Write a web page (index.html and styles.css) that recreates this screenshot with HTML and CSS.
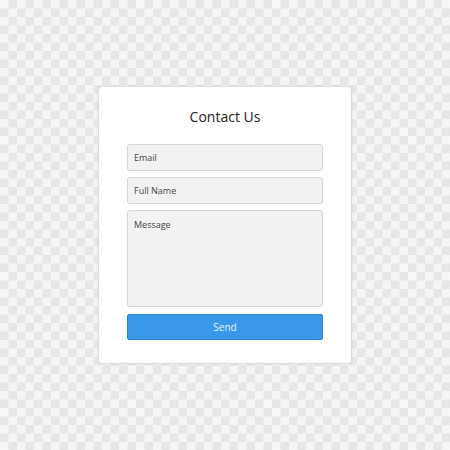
FILE: index.html
```html
<!DOCTYPE html>
<html lang="en">
<head>
    <meta charset="UTF-8">
    <meta name="viewport" content="width=device-width, initial-scale=1.0">
    <title>Contact Us</title>
    <link rel="stylesheet" href="styles.css">
</head>
<body>
    <!-- Contact Card -->
    <div class="contact-card">
        <h2>Contact Us</h2>
        <form class="contact-form">
            <input type="text" class="field" placeholder="Email">
            <input type="text" class="field" placeholder="Full Name">
            <textarea class="field message" placeholder="Message"></textarea>
            <button type="button">Send</button>
        </form>
    </div>
</body>
</html>
```

FILE: styles.css
```css
html, body {
    height: 100%;
}
body {
    font-family: "Open Sans", Arial, sans-serif;
    display: flex;
    justify-content: center;
    align-items: center;
    margin: 0;
    background-color: #f5f5f5;
    background-image:
        linear-gradient(45deg, #e6e6e6 25%, transparent 25%, transparent 75%, #e6e6e6 75%),
        linear-gradient(45deg, #e6e6e6 25%, transparent 25%, transparent 75%, #e6e6e6 75%);
    background-size: 17px 17px;
    background-position: 0 0, 8.5px 8.5px;
}
.contact-card {
    box-sizing: border-box;
    width: 254px;
    height: 278px;
    padding: 20px 28px 24px 28px;
    background-color: #fff;
    border: 1px solid #dcdcdc;
    border-radius: 4px;
    box-shadow: 0 0 3px rgba(0, 0, 0, 0.08);
}
.contact-card h2 {
    margin: 0 0 17px 0;
    font-size: 14px;
    font-weight: normal;
    line-height: 20px;
    text-align: center;
    color: #222;
}
.contact-form {
    display: flex;
    flex-direction: column;
    gap: 6px;
}
.field {
    box-sizing: border-box;
    width: 100%;
    height: 27px;
    margin: 0;
    padding: 0 6px;
    border: 1px solid #d6d6d6;
    border-radius: 3px;
    background-color: #f2f2f2;
    font-family: "Open Sans", Arial, sans-serif;
    font-size: 9px;
    color: #333;
    outline: none;
}
.field::placeholder {
    color: #444;
}
.message {
    height: 97px;
    padding-top: 7px;
    resize: none;
}
button {
    box-sizing: border-box;
    height: 26px;
    margin-top: 1px;
    border: 1px solid #2f84d2;
    border-radius: 2px;
    background-color: #3a98ea;
    color: #e8f3fd;
    font-family: "Open Sans", Arial, sans-serif;
    font-size: 10px;
    cursor: pointer;
}
```
